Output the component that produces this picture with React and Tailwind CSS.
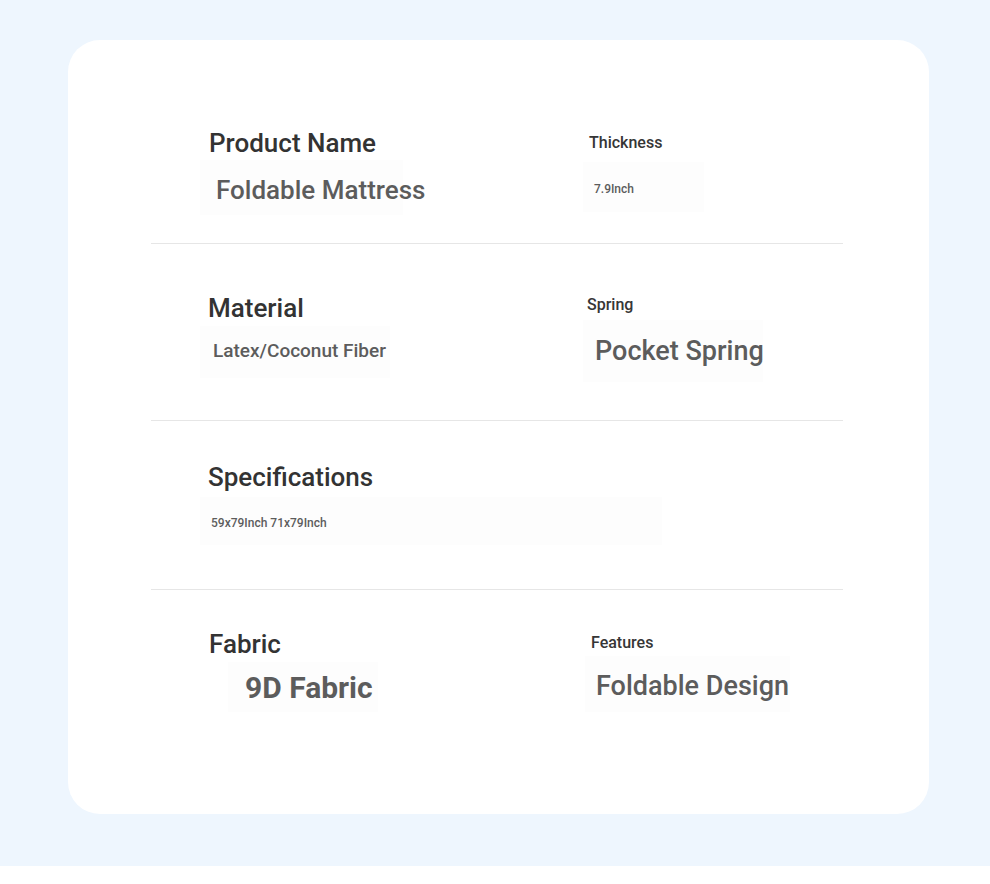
import React from 'react';

const Title = ({ children, className = '' }) => (
  <div className={`text-[26px] leading-[32px] font-medium text-[#333333] whitespace-nowrap ${className}`}>
    {children}
  </div>
);

const Label = ({ children, className = '' }) => (
  <div className={`text-[16px] leading-[20px] font-medium text-[#363636] whitespace-nowrap ${className}`}>
    {children}
  </div>
);

const ValueBox = ({ children, className = '' }) => (
  <div className={`bg-[#fdfdfd] whitespace-nowrap text-[#5c5c5c] ${className}`}>{children}</div>
);

export default function App() {
  return (
    <div className="w-full min-h-[884px] bg-white" style={{ fontFamily: 'Roboto, "Noto Sans", sans-serif' }}>
      <div className="bg-[#eef6fe] pt-[40px] pb-[52px]">
        <div className="ml-[68px] w-[861px] h-[774px] bg-white rounded-[32px] pl-[83px] pr-[86px]">
          {/* Row 1 */}
          <div className="h-[204px] border-b border-[#e6e6e6] flex items-start">
            <div className="ml-[49px] w-[380px] flex flex-col items-start">
              <Title className="mt-[87px] ml-[9px]">Product Name</Title>
              <ValueBox className="mt-[1px] w-[203px] h-[55px] pt-[14px] pl-[16px] text-[26px] leading-[32px] font-medium">
                Foldable Mattress
              </ValueBox>
            </div>
            <div className="flex flex-col items-start">
              <Label className="mt-[93px] ml-[9px]">Thickness</Label>
              <ValueBox className="mt-[9px] ml-[3px] w-[121px] h-[50px] pt-[19px] pl-[11px] text-[12px] leading-[16px] font-medium text-[#4a4a4a]">
                7.9Inch
              </ValueBox>
            </div>
          </div>

          {/* Row 2 */}
          <div className="h-[177px] border-b border-[#e6e6e6] flex items-start">
            <div className="ml-[49px] w-[380px] flex flex-col items-start">
              <Title className="mt-[48px] ml-[8px]">Material</Title>
              <ValueBox className="mt-[2px] w-[190px] h-[52px] pt-[13px] pl-[13px] text-[19px] leading-[24px] font-medium">
                Latex/Coconut Fiber
              </ValueBox>
            </div>
            <div className="flex flex-col items-start">
              <Label className="mt-[51px] ml-[7px]">Spring</Label>
              <ValueBox className="mt-[5px] ml-[3px] w-[180px] h-[62px] pt-[15px] pl-[12px] text-[27px] leading-[32px] font-medium">
                Pocket Spring
              </ValueBox>
            </div>
          </div>

          {/* Row 3 */}
          <div className="h-[169px] border-b border-[#e6e6e6] flex items-start">
            <div className="ml-[49px] flex flex-col items-start">
              <Title className="mt-[40px] ml-[8px]">Specifications</Title>
              <ValueBox className="mt-[4px] w-[462px] h-[48px] pt-[18px] pl-[11px] text-[12px] leading-[16px] font-medium text-[#4a4a4a]">
                59x79Inch 71x79Inch
              </ValueBox>
            </div>
          </div>

          {/* Row 4 */}
          <div className="h-[224px] flex items-start">
            <div className="ml-[49px] w-[380px] flex flex-col items-start">
              <Title className="mt-[38px] ml-[9px]">Fabric</Title>
              <ValueBox className="mt-[2px] ml-[28px] w-[150px] h-[50px] pt-[8px] pl-[17px] text-[30px] leading-[36px] font-bold">
                9D Fabric
              </ValueBox>
            </div>
            <div className="flex flex-col items-start">
              <Label className="mt-[43px] ml-[11px]">Features</Label>
              <ValueBox className="mt-[3px] ml-[5px] w-[205px] h-[56px] pt-[14px] pl-[11px] text-[27px] leading-[32px] font-medium">
                Foldable Design
              </ValueBox>
            </div>
          </div>
        </div>
      </div>
    </div>
  );
}
